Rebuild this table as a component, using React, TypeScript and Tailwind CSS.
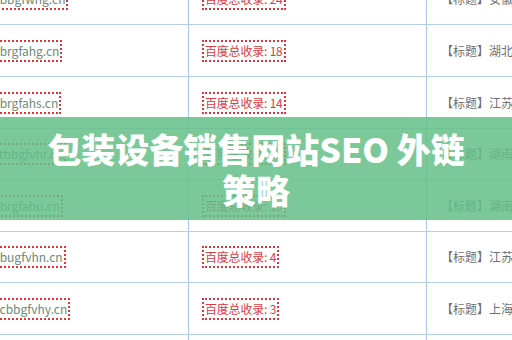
const rows = [
  { h: "h-[52px]", domain: "www.bbgfwhg.cn", count: 24, title: "【标题】安徽省包装设备有限公司" },
  { h: "h-[52px]", domain: "www.brgfahg.cn", count: 18, title: "【标题】湖北省包装设备有限公司" },
  { h: "h-[52px]", domain: "www.brgfahs.cn", count: 14, title: "【标题】江苏省包装设备有限公司" },
  { h: "h-[51px]", domain: "www.tbbgfvhr.cn", count: 12, title: "【标题】湖南省包装设备有限公司" },
  { h: "h-[52px]", domain: "www.brgfahu.cn", count: 10, title: "【标题】湖南省包装设备有限公司" },
  { h: "h-[51px]", domain: "www.bugfvhn.cn", count: 4, title: "【标题】江苏省包装设备有限公司" },
  { h: "h-[52px]", domain: "www.cbbgfvhy.cn", count: 3, title: "【标题】上海市包装设备有限公司" },
  { h: "h-[52px]", domain: "www.bbgfvhk.cn", count: 2, title: "【标题】浙江省包装设备有限公司" },
];

export default function App() {
  return (
    <div
      className="relative w-[512px] h-[340px] overflow-hidden bg-white"
      style={{ fontFamily: '"Noto Sans CJK SC", "Noto Sans", sans-serif' }}
    >
      {/* 表格 */}
      <div className="flex flex-col -mt-[27px]">
        {rows.map((r, i) => (
          <div key={i} className={`flex shrink-0 border-b border-[#b3cfeb] ${r.h}`}>
            <div className="w-[189px] shrink-0 border-r border-[#a9c8ea] flex items-center overflow-hidden">
              <span className="-ml-[35px] whitespace-nowrap border-2 border-dotted border-[#e0343c] px-[1px] text-[12px] leading-[18px] text-[#6b8a79]">
                {r.domain}
              </span>
            </div>
            <div className="w-[238px] shrink-0 border-r border-[#a9c8ea] flex items-center pl-[13px]">
              <span className="whitespace-nowrap border-2 border-dotted border-[#e0343c] px-[1px] text-[12px] leading-[18px] tracking-[-0.2px] text-[#dc3b40]">
                百度总收录: {r.count}
              </span>
            </div>
            <div className="flex-1 flex items-center pl-[14px] overflow-hidden">
              <span className="whitespace-nowrap text-[12px] text-[#707070]">{r.title}</span>
            </div>
          </div>
        ))}
      </div>

      {/* 标题横幅 */}
      <div className="absolute left-0 right-0 top-[117px] h-[103px] bg-[rgba(100,190,135,0.85)] flex items-center justify-center">
        <h1 className="text-center text-white font-black text-[34px] leading-[41px]">
          包装设备销售网站SEO 外链
          <br />
          策略
        </h1>
      </div>
    </div>
  );
}
